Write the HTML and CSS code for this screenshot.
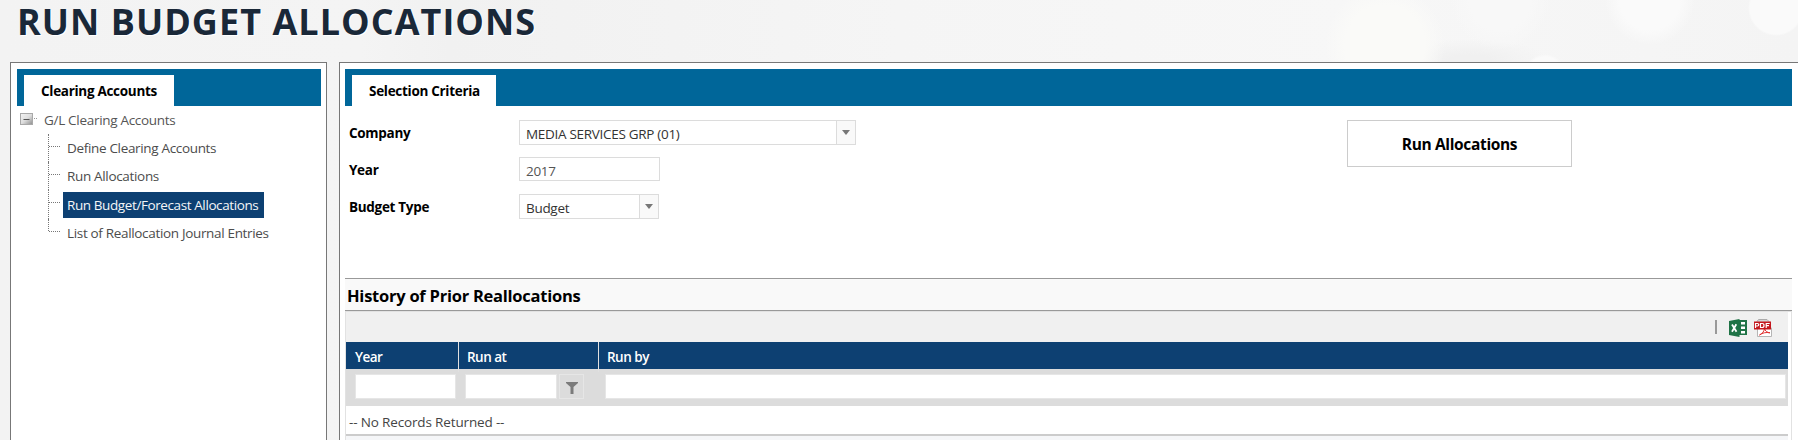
FILE: index.html
```html
<!DOCTYPE html>
<html lang="en">
<head>
<meta charset="utf-8">
<title>Run Budget Allocations</title>
<link rel="stylesheet" href="styles.css">
</head>
<body>
<h1 class="title">RUN BUDGET ALLOCATIONS</h1>
<div class="columns">
  <aside class="panel side">
    <div class="tabbar"><div class="tab tab-side">Clearing Accounts</div></div>
    <div class="tree-root">
      <svg class="toggle" width="18" height="13" viewBox="0 0 18 13">
        <defs><linearGradient id="tg" x1="0" y1="0" x2="1" y2="1"><stop offset="0" stop-color="#f4f4f4"/><stop offset=".5" stop-color="#dedede"/><stop offset="1" stop-color="#8c8c8c"/></linearGradient></defs>
        <rect x=".5" y=".5" width="12" height="11" fill="url(#tg)" stroke="#a9a9a9"/>
        <path d="M3.5 6.5h6" stroke="#555"/>
        <path d="M14 5.500h1M16 5.500h1" stroke="#999"/>
      </svg>
      <span>G/L Clearing Accounts</span>
    </div>
    <ul class="tree">
      <li><span class="node">Define Clearing Accounts</span></li>
      <li><span class="node">Run Allocations</span></li>
      <li class="tall"><span class="node selected">Run Budget/Forecast Allocations</span></li>
      <li class="last"><span class="node">List of Reallocation Journal Entries</span></li>
    </ul>
  </aside>
  <main class="panel main">
    <div class="tabbar"><div class="tab tab-main">Selection Criteria</div></div>
    <section class="criteria">
      <div class="form">
        <label>Company</label>
        <div class="select wide">MEDIA SERVICES GRP (01)<i class="drop"><svg width="8" height="5"><path d="M0 0h8L4 5z" fill="#777"/></svg></i></div>
        <label>Year</label>
        <div class="input">2017</div>
        <label>Budget Type</label>
        <div class="select">Budget<i class="drop"><svg width="8" height="5"><path d="M0 0h8L4 5z" fill="#777"/></svg></i></div>
      </div>
      <button class="run">Run Allocations</button>
    </section>
    <h2 class="history">History of Prior Reallocations</h2>
    <div class="gridwrap">
      <div class="grid">
        <div class="toolbar">
          <i class="bar"></i>
          <svg class="xls" width="18" height="18" viewBox="0 0 18 18">
            <path d="M10 1h8v15h-8z" fill="#1f7346"/>
            <path d="M12 3h4v2.500h-4zM12 7.500h4v2.500h-4zM12 12h4v2.500h-4z" fill="#fff"/>
            <path d="M0 2L10.500 0v18L0 16z" fill="#1f7346"/>
            <path d="M3 5.500L7.500 12.700M7.300 5.200L3 12.700" stroke="#fff" stroke-width="1.800"/>
          </svg>
          <svg width="18" height="18" viewBox="0 0 18 18">
            <path d="M4.500.500h8.500l3 3v3h-13v-4z" fill="#d5d5d5" stroke="#aaa"/>
            <path d="M3.500 9h14v8.500h-14z" fill="#fff" stroke="#b5b5b5"/>
            <path d="M5.500 16c3-1.500 5-4 5-7 .3 3 3 4.800 5.500 4.800-4-.8-7.500 0-10.500 2.200z" fill="none" stroke="#e03030"/>
            <path d="M0 2.500h17v8H0z" fill="#c4161c"/>
            <path d="M1.500 9V4.500h2q1.200 0 1.200 1.200T3.500 7h-2M6.500 4.500v4h1.700q1.800 0 1.800-2t-1.800-2zM12.200 9V4.500h3.500M12.200 6.700h2.800" fill="none" stroke="#fff" stroke-width="1.200"/>
          </svg>
        </div>
        <div class="row head"><div>Year</div><div>Run at</div><div>Run by</div></div>
        <div class="row filters">
          <div><b class="box"></b></div>
          <div><b class="box"></b><i class="funnel"><svg width="12" height="12"><path d="M0 0h12v1L7.500 5v7h-3V5L0 1z" fill="#7b7b7b"/></svg></i></div>
          <div><b class="box"></b></div>
        </div>
        <div class="empty">-- No Records Returned --</div>
        <div class="footer"></div>
      </div>
    </div>
  </main>
</div>
</body>
</html>
```
FILE: styles.css
```css
* { box-sizing: border-box; }
body {
  margin: 0; height: 440px; overflow: hidden;
  font: 13.5px/20px "Open Sans", "Noto Sans", sans-serif; color: #000;
  letter-spacing: -.3px;
  background-color: #f4f4f4;
  background-image:
    radial-gradient(circle at 1776px 8px, #fafafa 26px, transparent 28px),
    radial-gradient(circle at 1545px 76px, #fafafa 19px, transparent 22px),
    radial-gradient(circle at 1650px 0, #fafafa 30px, transparent 45px),
    radial-gradient(circle at 1500px 0, #f8f8f8 30px, transparent 50px),
    radial-gradient(circle at 1385px 45px, #fafaf8 40px, transparent 60px),
    radial-gradient(ellipse at 1470px 60px, #f0f0f0 20px, transparent 80px),
    linear-gradient(90deg, #f3f3f3, #f4f4f4 20%, #f1f1f1 25%, #f5f5f5 50%, #f7f7f7 75%, #f4f4f4);
}
.title {
  margin: 0; height: 62px; padding: 1px 0 0 17px;
  font-size: 36px; line-height: 42px; font-weight: 700; color: #1a2838; letter-spacing: 1.03px;
  text-shadow: 1px 1px 0 #fff; white-space: nowrap;
}
.columns { display: flex; gap: 12px; height: 400px; padding-left: 10px; }
.panel { flex: none; background: #fff; border: 1px solid #777; padding-top: 6px; white-space: nowrap; }
.side { width: 317px; padding-left: 6px; padding-right: 5px; }
.main { width: 1480px; padding-left: 5px; }
.main > * { width: 1447px; }
.tabbar { height: 37px; background: #069; padding: 6px 0 0 7px; }
.tab { height: 31px; background: #fff; font-weight: 700; display: flex; justify-content: center; align-items: center; }
.tab-side { width: 150px; }
.tab-main { width: 144px; padding-left: 1px; }
.tree-root { display: flex; color: #555; height: 28px; padding: 4px 0 0 3px; }
.toggle { margin: 3px 6px 0 0; }
.tree { list-style: none; margin: 0; padding: 0 0 0 31px; color: #4c4c4c; }
.tree li { position: relative; height: 28px; display: flex; align-items: center; padding-left: 15px; }
.tree .tall { height: 29px; }
.tree li::before { content: ""; position: absolute; left: 0; top: 0; height: 100%; border-left: 1px dotted #777; }
.tree li::after { content: ""; position: absolute; left: 1px; top: 12px; width: 11px; border-top: 1px dotted #777; }
.tree .last::before { height: 12px; }
.node { padding: 3px 4px; letter-spacing: -.33px; }
.selected { background: #0d4072; color: #f4f6f8; width: 201px; font-weight: 500; letter-spacing: -.4px; }
.criteria { display: flex; height: 172px; padding: 14px 0 0 4px; }
.form { display: grid; grid-template-columns: 170px 337px; grid-auto-rows: 25px; row-gap: 12px; height: 99px; }
.form label { font-weight: 700; padding-top: 3px; }
.select, .input { border: 1px solid #dcdcdc; width: 140px; padding: 3px 0 0 6px; color: #333; position: relative; }
.input { width: 141px; height: 24px; color: #555; }
.wide { width: 337px; }
.drop { position: absolute; right: 0; top: 0; bottom: 0; width: 19px; border-left: 1px solid #dcdcdc; background: #f9f9f9; display: grid; place-items: center; padding-bottom: 1px; }
.run { margin-left: 491px; width: 225px; height: 47px; border: 1px solid #ccc; background: #fff; font: 700 15.500px/22px "Open Sans", sans-serif; letter-spacing: -.35px; padding: 0; color: #000; }
.history { margin: 0; height: 33px; border: solid #999; border-width: 1px 0; background: #f9f9f9; font-size: 16.500px; line-height: 33px; font-weight: 700; letter-spacing: -.25px; padding-left: 2px; }
.gridwrap { border: solid #e2e2e2; border-width: 1px 1px 0; padding-right: 3px; }
.grid { background: #fff; }
.toolbar { height: 30px; background: #f0f0f0; display: flex; justify-content: flex-end; padding: 7px 16px 0 0; gap: 7px; }
.bar { width: 2px; height: 14px; background: #999; margin: 1px 5px 0 0; }
.row { display: grid; grid-template-columns: 112px 140px 1fr; }
.head { height: 27px; background: #0d4072; color: #fff; font-weight: 600; letter-spacing: -.5px; line-height: 30px; }
.head > div { padding-left: 8px; border-left: 1px solid #e0e0e0; }
.head > div:first-child { border: 0; padding-left: 9px; }
.filters { height: 37px; background: #dcdcdc; padding-top: 5px; }
.filters > div { display: flex; gap: 2px; height: 25px; padding-left: 7px; }
.filters > div:first-child { padding: 0 2px 0 9px; }
.filters > div:nth-child(2) { padding-right: 14px; }
.filters > div:last-child { padding-right: 2px; }
.box { flex: 1; background: #fff; border: 1px solid #e6e6e6; }
.funnel { width: 25px; border: 1px solid #e6e6e6; display: grid; place-items: center; padding-top: 2px; }
.empty { height: 28px; padding: 6px 0 0 3px; color: #444; letter-spacing: -.15px; }
.footer { border-top: 2px solid #ccc; height: 10px; background: #f5f6f8; }
```
